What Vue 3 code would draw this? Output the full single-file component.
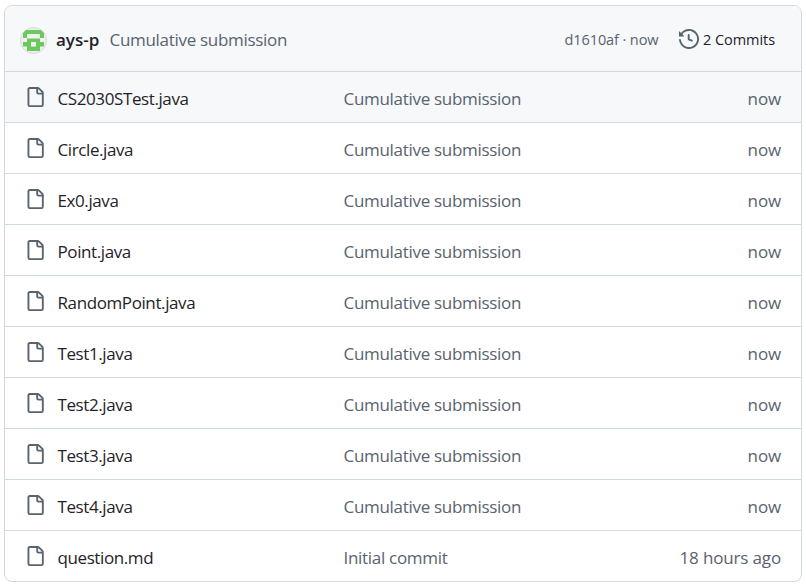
<script setup>
const names = ['CS2030STest.java', 'Circle.java', 'Ex0.java', 'Point.java', 'RandomPoint.java', 'Test1.java', 'Test2.java', 'Test3.java', 'Test4.java']
const files = [
  ...names.map((name) => ({ name, message: 'Cumulative submission', age: 'now' })),
  { name: 'question.md', message: 'Initial commit', age: '18 hours ago' },
]
</script>

<template>
  <main class="listing">
    <header class="latest">
      <svg class="avatar" viewBox="0 0 27 27">
        <circle cx="13.5" cy="13.5" r="13" fill="#f0f0f0" stroke="#d5d8dc" />
        <path fill="#6cc95c" fill-rule="evenodd" d="M6 3H21L24 6V11H20V7H7V11H3V6ZM7 11.500H20V15H24V19.500H20V24H7V19.500H3V15H7ZM11 15V19.500H16V15Z" />
      </svg>
      <span class="author">ays-p</span>
      <span class="summary">Cumulative submission</span>
      <span class="hash">d1610af · now</span>
      <span class="commits">
        <svg class="icon" viewBox="0 0 16 16"><path d="m.427 1.927 1.215 1.215a8.002 8.002 0 1 1-1.600 5.685.75.75 0 1 1 1.493-.154 6.500 6.500 0 1 0 1.180-4.458l1.358 1.358A.25.25 0 0 1 3.896 6H.25A.25.25 0 0 1 0 5.750V2.104a.25.25 0 0 1 .427-.177ZM7.750 4a.75.75 0 0 1 .75.75v2.992l2.028.812a.75.75 0 0 1-.557 1.392l-2.500-1A.751.751 0 0 1 7 8.250v-3.500A.75.75 0 0 1 7.750 4Z" /></svg>
        <span class="count">2 Commits</span>
      </span>
    </header>
    <div v-for="(file, i) in files" :key="file.name" class="row" :class="{ active: i === 0 }">
      <svg class="icon" viewBox="0 0 16 16"><path d="M2 1.750C2 .784 2.784 0 3.750 0h6.586c.464 0 .909.184 1.237.513l2.914 2.914c.329.328.513.773.513 1.237v9.586A1.750 1.750 0 0 1 13.250 16h-9.500A1.750 1.750 0 0 1 2 14.250Zm1.750-.25a.25.25 0 0 0-.25.25v12.500c0 .138.112.25.25.25h9.500a.25.25 0 0 0 .25-.25V6h-2.750A1.750 1.750 0 0 1 9 4.250V1.500Zm6.750.062V4.250c0 .138.112.25.25.25h2.688l-.011-.013-2.914-2.914-.013-.011Z" /></svg>
      <span class="name">{{ file.name }}</span>
      <span class="message">{{ file.message }}</span>
      <span class="age">{{ file.age }}</span>
    </div>
  </main>
</template>

<style>
body {
  background: #fff;
}
</style>

<style scoped>
.listing {
  box-sizing: border-box;
  width: 798px;
  height: 577px;
  margin: 5px 0 0 4px;
  border: 1px solid #d1d9e0;
  border-radius: 8px;
  overflow: hidden;
  font-family: "Open Sans", "Noto Sans", sans-serif;
  font-size: 17px;
  line-height: 26px;
  letter-spacing: -0.3px;
  color: #1f2328;
  white-space: nowrap;
}
.latest {
  display: flex;
  align-items: center;
  height: 65px;
  padding: 0 26px 0 15px;
  background: #f6f8fa;
}
.avatar {
  width: 27px;
  height: 27px;
  margin-top: 4px;
}
.author {
  width: 53.5px;
  margin: 3px 0 0 9px;
  font-weight: 600;
  letter-spacing: 0;
}
.summary {
  margin-top: 3px;
  color: #59636e;
}
.hash {
  margin: 3px 20.5px 0 auto;
  font-size: 14.500px;
  letter-spacing: -0.1px;
  color: #59636e;
}
.commits {
  display: flex;
  align-items: center;
  gap: 4px;
  margin-top: 3px;
  font-size: 14.500px;
  letter-spacing: -0.05px;
}
.commits .icon {
  margin-top: -2px;
}
.row {
  display: grid;
  grid-template-columns: 32px 286px 1fr auto;
  align-items: center;
  height: 50px;
  padding: 0 20px;
  border-top: 1px solid #d1d9e0;
}
.active {
  background: #f6f8fa;
}
.icon {
  display: block;
  width: 20px;
  height: 20px;
  fill: #59636e;
}
.message,
.age {
  color: #59636e;
}
.name,
.message,
.age {
  padding-top: 4px;
}
.name {
  padding-left: 0.5px;
  letter-spacing: -0.4px;
}
.message {
  padding-left: 0.5px;
}
.age {
  letter-spacing: -0.15px;
}
</style>
